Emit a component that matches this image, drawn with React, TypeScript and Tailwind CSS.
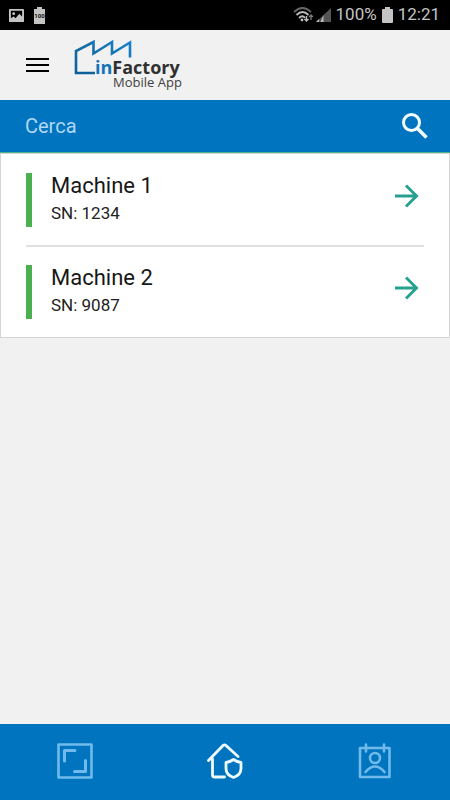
import { useState } from "react";

type Machine = {
  name: string;
  serial: string;
};

const machines: Machine[] = [
  { name: "Machine 1", serial: "1234" },
  { name: "Machine 2", serial: "9087" },
];

function StatusBar() {
  return (
    <div className="flex h-[30px] shrink-0 items-center justify-between bg-black pr-[10px] pl-[9px] text-[17px] text-[#c4c4c4]">
      <div className="flex items-center gap-[10px]">
        <svg width="15" height="15" viewBox="0 0 16 16" aria-hidden="true">
          <path fill="#c4c4c4" fillRule="evenodd" d="M1 1h14a1 1 0 0 1 1 1v12a1 1 0 0 1-1 1H1a1 1 0 0 1-1-1V2a1 1 0 0 1 1-1zM2 3v8l3-2 2 2 4-5 3 3V3z" />
          <circle cx="5" cy="6" r="1.5" fill="#c4c4c4" />
        </svg>
        <svg width="11" height="17" viewBox="0 0 11 17" aria-hidden="true">
          <path fill="#c4c4c4" d="M3 0h5v2h3v15H0V2h3z" />
          <text x="5.5" y="11" textAnchor="middle" fontSize="6" fontWeight="700" fill="#111" fontFamily="Roboto, sans-serif">100</text>
        </svg>
      </div>
      <div className="flex items-center">
        <svg className="mr-1" width="39" height="18" viewBox="0 0 39 18" aria-hidden="true">
          <g fill="none" strokeWidth="1.8">
            <path stroke="#666" d="M1 6q8.500-8 17 0" />
            <path stroke="#bbb" d="M3.500 9q6-6 12 0M6 12q3.500-3.500 6 0" />
            <path stroke="#bbb" strokeWidth="1.400" d="M13.500 10v5m-2-2 2 2 2-2" />
            <path stroke="#777" strokeWidth="1.400" d="M18 14V9m-2 2 2-2 2 2" />
          </g>
          <circle cx="9" cy="14" r="1.400" fill="#bbb" />
          <path fill="#555" d="M23 16h15V2z" />
          <path fill="#bbb" d="M23 16h3v-3zM27.500 16h3V9z" />
        </svg>
        <span>100%</span>
        <svg className="mx-[5px]" width="11" height="16" viewBox="0 0 11 16" aria-hidden="true">
          <path fill="#c4c4c4" d="M3 0h5v2h2a1 1 0 0 1 1 1v12a1 1 0 0 1-1 1H1a1 1 0 0 1-1-1V3a1 1 0 0 1 1-1h2z" />
        </svg>
        <span>12:21</span>
      </div>
    </div>
  );
}

function Logo() {
  return (
    <svg width="110" height="56" viewBox="0 0 110 56" role="img" aria-label="inFactory Mobile App">
      <defs>
        <linearGradient id="roof" x1="0" y1="1" x2="1" y2="0">
          <stop offset="0" stopColor="#0b5f98" />
          <stop offset="0.4" stopColor="#15699f" />
          <stop offset="1" stopColor="#1683cc" />
        </linearGradient>
      </defs>
      <path d="M21 36H2V14L19.500 5V16.500L38 5V16.500L56 5.500V20.500" fill="none" stroke="url(#roof)" strokeWidth="2.600" />
      <text x="21" y="37" fontFamily="'Open Sans', 'Noto Sans', sans-serif" fontSize="18" fontWeight="700" fill="#303030">
        <tspan fill="#1274b8">in</tspan>
        <tspan>Factory</tspan>
      </text>
      <text x="39" y="50" fontFamily="'Open Sans', 'Noto Sans', sans-serif" fontSize="13" fill="#404040">
        Mobile App
      </text>
    </svg>
  );
}

function Header() {
  return (
    <header className="flex h-[70px] shrink-0 items-center bg-[#f1f1f1] pl-[26px]">
      <button type="button" aria-label="Menu" className="mr-[25px]">
        <svg width="23" height="14" viewBox="0 0 23 14" aria-hidden="true">
          <path d="M0 1h23M0 7h23M0 13h23" stroke="#000" strokeWidth="2" />
        </svg>
      </button>
      <Logo />
    </header>
  );
}

function SearchBar() {
  const [query, setQuery] = useState("");

  return (
    <form
      role="search"
      onSubmit={(event) => event.preventDefault()}
      className="flex h-[53px] shrink-0 items-center border-b border-[#4caf8f] bg-[#0074be] pr-[22px] pl-[25px]"
    >
      <input
        type="text"
        value={query}
        onChange={(event) => setQuery(event.target.value)}
        placeholder="Cerca"
        aria-label="Cerca"
        className="min-w-0 flex-1 bg-transparent text-[20px] text-white outline-none placeholder:text-[#b0d8f4]"
      />
      <button type="submit" aria-label="Avvia ricerca">
        <svg width="26" height="26" viewBox="0 0 26 26" aria-hidden="true">
          <circle cx="9.500" cy="9.500" r="8" fill="none" stroke="#f2fbff" strokeWidth="3" />
          <path d="m15 15 9.500 9.500" stroke="#f2fbff" strokeWidth="3.600" />
        </svg>
      </button>
    </form>
  );
}

function MachineRow({ machine }: { machine: Machine }) {
  return (
    <li className="border-b-2 border-[#e0e0e0] last:border-b-0">
      <a href="#" className="flex items-start py-[18px]">
        <span className="h-[54px] w-[6px] shrink-0 bg-[#4caf50]" />
        <span className="ml-[19px] flex flex-1 flex-col">
          <span className="text-[22px] leading-[26px] text-[#171717]">{machine.name}</span>
          <span className="text-[17px] leading-[28px] text-[#222]">SN: {machine.serial}</span>
        </span>
        <svg className="mt-[11px] mr-[5px]" width="24" height="24" viewBox="0 0 24 24" aria-hidden="true">
          <path d="M0 12h22.500M11 1.500 21.500 12 11 22.500" fill="none" stroke="#26a08f" strokeWidth="2.900" />
        </svg>
      </a>
    </li>
  );
}

function BottomNav() {
  return (
    <nav className="grid h-[76px] shrink-0 grid-cols-3 bg-[#0074be] pb-[2px]">
      <button type="button" aria-label="Scansione" className="flex items-center justify-center text-[#70bbec]">
        <svg width="36" height="36" viewBox="0 0 36 36" fill="none" stroke="currentColor" aria-hidden="true">
          <path d="M1.500 1.500h33v33h-33z" strokeWidth="2.600" strokeLinejoin="round" />
          <path d="M7.500 18V7.500H18M28.500 17.500v11H17.500" strokeWidth="3" strokeLinecap="round" strokeLinejoin="round" />
        </svg>
      </button>
      <button type="button" aria-label="Home" aria-current="page" className="flex items-center justify-center text-[#effaff]">
        <svg width="36" height="36" viewBox="0 0 36 36" fill="none" stroke="currentColor" strokeWidth="2.800" strokeLinecap="round" strokeLinejoin="round" aria-hidden="true">
          <path d="M1.500 17.500 16 2.500q1.500-1.300 3 0L31 13.500M5.500 16v16q0 2 2 2h10" />
          <path d="M26.500 16.500q3.500 2.500 7.500 3v6q0 6.500-7.500 9-7.500-2.500-7.500-9v-6q4-.5 7.500-3z" />
        </svg>
      </button>
      <button type="button" aria-label="Contatti" className="flex items-center justify-center text-[#70bbec]">
        <svg width="36" height="36" viewBox="0 0 36 36" fill="none" stroke="currentColor" strokeWidth="2.600" strokeLinecap="round" strokeLinejoin="round" aria-hidden="true">
          <path d="M3 5h29.500v29H3zM9 1.500v7M27 1.500v7" />
          <circle cx="18" cy="15" r="5" />
          <path d="M8.500 29q9.500-11 19 0" />
        </svg>
      </button>
    </nav>
  );
}

export default function App() {
  return (
    <div className="flex min-h-screen flex-col bg-[#f1f1f1] font-[Roboto,sans-serif]">
      <StatusBar />
      <Header />
      <SearchBar />
      <main className="flex-1">
        <ul className="border border-[#d4d4d4] bg-white px-[25px] pt-px">
          {machines.map((machine) => (
            <MachineRow key={machine.serial} machine={machine} />
          ))}
        </ul>
      </main>
      <BottomNav />
    </div>
  );
}
